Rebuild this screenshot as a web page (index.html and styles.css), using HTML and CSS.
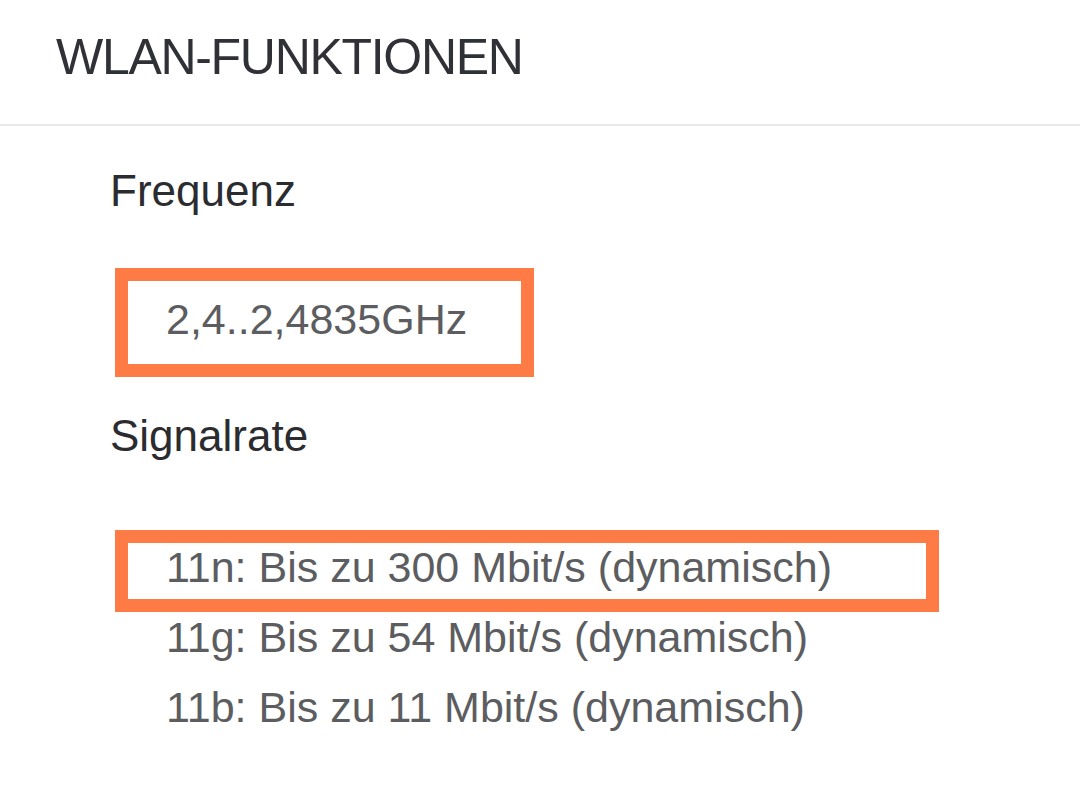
FILE: index.html
```html
<!DOCTYPE html>
<html lang="de">
<head>
<meta charset="UTF-8" />
<meta name="viewport" content="width=device-width, initial-scale=1" />
<title>WLAN-Funktionen</title>
<link rel="stylesheet" href="styles.css">
</head>
<body>
  <header class="page-header">
    <h1>WLAN-FUNKTIONEN</h1>
  </header>

  <main class="specs">
    <section class="field field-freq">
      <h2 class="field-label">Frequenz</h2>
      <div class="field-value marked marked-freq">2,4..2,4835GHz</div>
    </section>

    <section class="field field-rate">
      <h2 class="field-label">Signalrate</h2>
      <div class="field-value marked marked-rate">11n: Bis zu 300 Mbit/s (dynamisch)</div>
      <div class="field-value">11g: Bis zu 54 Mbit/s (dynamisch)</div>
      <div class="field-value">11b: Bis zu 11 Mbit/s (dynamisch)</div>
    </section>
  </main>
</body>
</html>
```

FILE: styles.css
```css
/* Reset */
*,
*::before,
*::after {
  box-sizing: border-box;
}
body {
  margin: 0;
  font-family: 'Liberation Sans', Arial, sans-serif;
  background: #fff;
  color: #2c2d31;
}

/* Header */
.page-header {
  height: 126px;
  padding: 32px 56px 0;
  border-bottom: 2px solid #e8e8e8;
}
.page-header h1 {
  margin: 0;
  font-size: 50px;
  line-height: 51px;
  font-weight: 400;
  letter-spacing: -1.3px;
  color: #303136;
}

/* Spec list */
.specs {
  padding: 43px 0 0 110px;
}
.field-label {
  margin: 0 0 71px;
  font-size: 44px;
  line-height: 44px;
  font-weight: 400;
  color: #2b2c30;
}
.field-freq {
  margin-bottom: 60px;
}
.field-rate .field-label {
  margin-bottom: 74px;
}
.field-value {
  position: relative;
  padding-left: 56px;
  font-size: 43px;
  line-height: 70px;
  color: #5c5d60;
}

/* Orange highlight frames drawn over the values */
.marked::before {
  content: '';
  position: absolute;
  left: 5px;
  border: 13px solid #ff7b45;
  pointer-events: none;
}
.marked-freq::before {
  top: -16px;
  width: 419px;
  height: 109px;
}
.marked-rate::before {
  top: -2px;
  width: 824px;
  height: 82px;
}
```
